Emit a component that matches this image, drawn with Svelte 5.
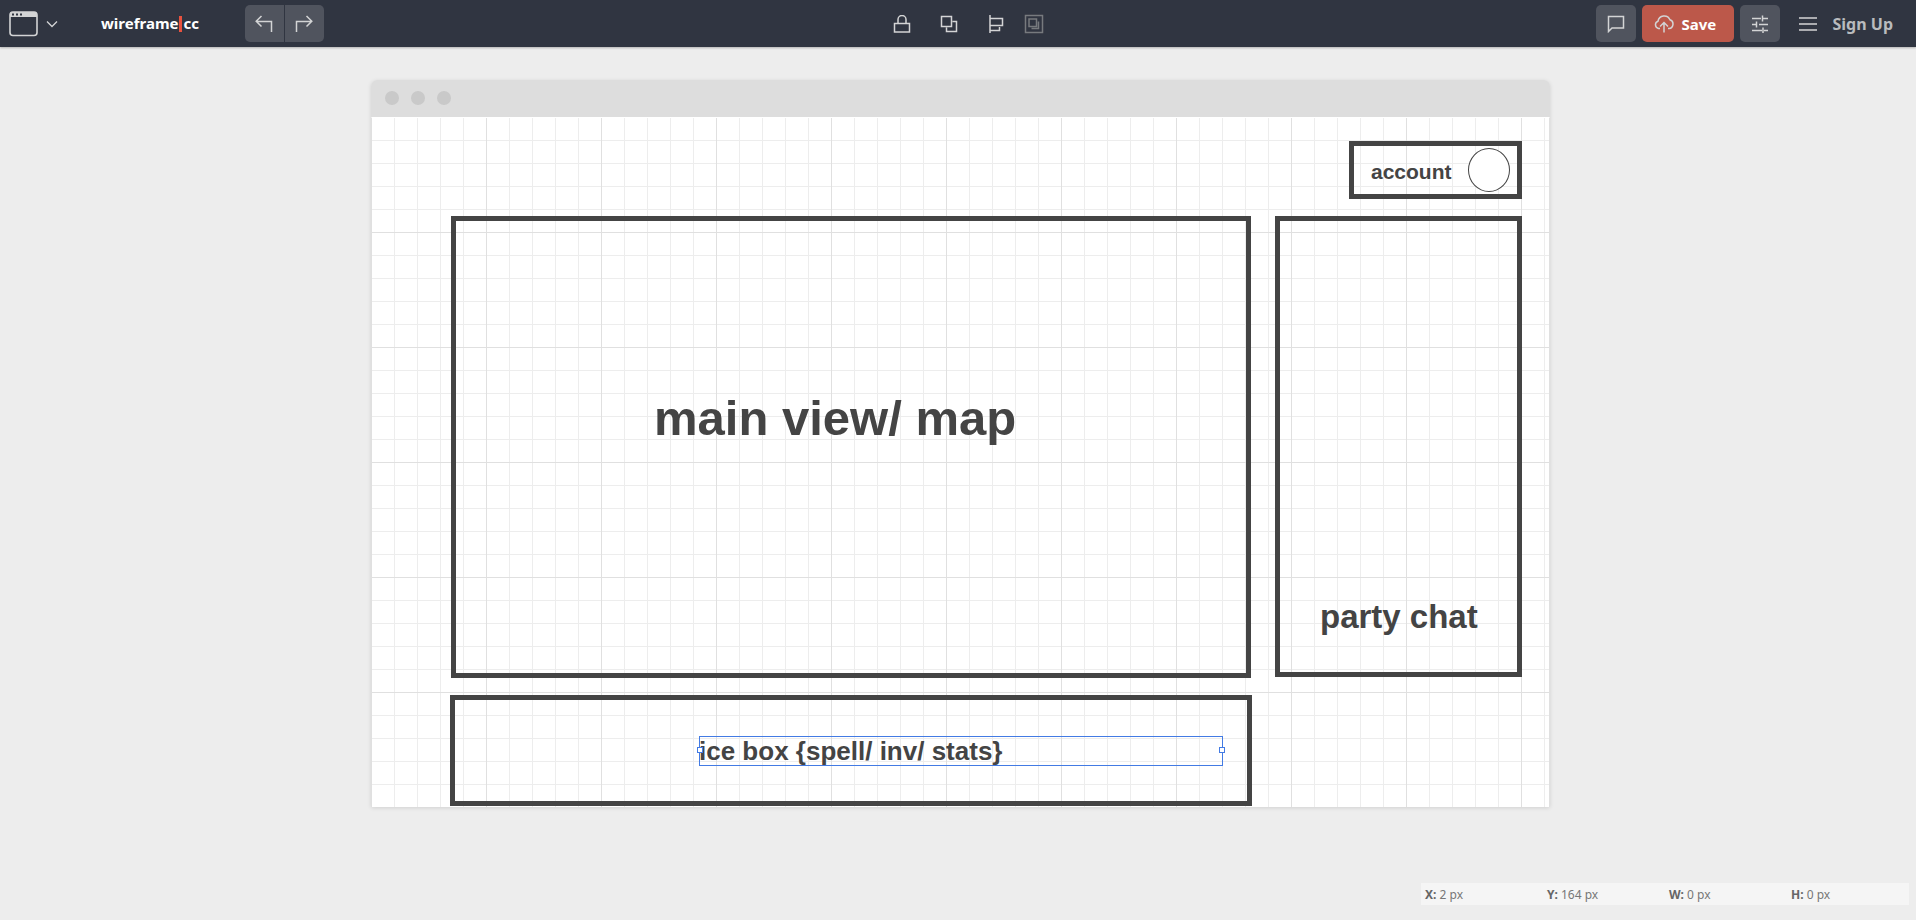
<script lang="ts">
  const stats = [
    { name: 'X', value: '2 px' },
    { name: 'Y', value: '164 px' },
    { name: 'W', value: '0 px' },
    { name: 'H', value: '0 px' }
  ];
</script>

<div class="app">
  <header class="toolbar">
    <div class="side">
      <button class="device" aria-label="Choose device">
        <svg width="29" height="26" viewBox="0 0 29 26">
          <rect x="1" y="1" width="27" height="23.5" rx="3" fill="none" stroke="#d3d4d5" stroke-width="1.6" />
          <path d="M1 6V4a3 3 0 0 1 3-3h21a3 3 0 0 1 3 3v2z" fill="#d3d4d5" />
          <path d="M3 2.5h2v2H3zM7 2.5h2v2H7zM11 2.5h2v2h-2z" fill="#303541" />
        </svg>
        <svg width="12" height="8" viewBox="0 0 12 8"><path d="M1 1.5l5 5 5-5" fill="none" stroke="#d3d4d5" stroke-width="1.3" /></svg>
      </button>
      <a class="logo" href="#home">wireframe<span class="bar"></span>cc</a>
      <div class="history">
        <button aria-label="Undo">
          <svg width="18" height="18" viewBox="0 0 18 18"><path d="M6.5 1L1.2 6.3l5.3 5.2M1.2 6.5h15.3V17" /></svg>
        </button>
        <button aria-label="Redo">
          <svg width="18" height="18" viewBox="0 0 18 18"><path d="M11.5 1l5.3 5.3-5.3 5.2M16.8 6.5H1.5V17" /></svg>
        </button>
      </div>
    </div>

    <div class="tools">
      <button aria-label="Lock">
        <svg width="18" height="18" viewBox="0 0 18 18"><path d="M1.5 8.5h15v8.5h-15zM5 8.5V4.5a4 4 0 0 1 8 0v4" /></svg>
      </button>
      <button aria-label="Arrange">
        <svg width="18" height="18" viewBox="0 0 18 18"><path d="M1.5 1.5h10v10h-10zM12.5 6.5h4v10h-10v-4" /></svg>
      </button>
      <button aria-label="Align">
        <svg width="18" height="18" viewBox="0 0 18 18"><path d="M3 0v18M3 3.5h12.500v7H3M3 15.5h9.500V12" /></svg>
      </button>
      <button class="group" aria-label="Group">
        <svg width="20" height="20" viewBox="0 0 20 20"><path d="M1.500 1.500h17v17h-17zM5 5h7.500v7.500H5zM14.500 7.500v7h-7" /></svg>
      </button>
    </div>

    <div class="side end">
      <button class="tile" aria-label="Comments">
        <svg width="18" height="18" viewBox="0 0 18 18"><path d="M1.500 1.500h15v11.500H5l-3.500 3.500z" /></svg>
      </button>
      <button class="save">
        <svg width="20" height="18" viewBox="0 0 20 18"><path d="M6 13.500H4.500A3.800 3.800 0 0 1 4 6.200A6.300 6.300 0 0 1 16 4.800A4.500 4.500 0 0 1 15 13.500H14M10 17.500V8M6 11.500l4-4 4 4" /></svg>
        Save
      </button>
      <button class="tile" aria-label="Settings">
        <svg width="18" height="18" viewBox="0 0 18 18"><path d="M1 3.500h9M12 3.500h5M11.500 0.500v6M1 9.500h5M8 9.500h9M5.500 6.500v6M1 15.500h10M13 15.500h4M12 12.500v6" /></svg>
      </button>
      <button class="menu" aria-label="Menu">
        <svg width="18" height="16" viewBox="0 0 18 16"><path d="M0 2h18M0 8h18M0 14h18" /></svg>
      </button>
      <a class="signup" href="#signup">Sign Up</a>
    </div>
  </header>

  <main class="stage">
    <div class="browser">
      <div class="chrome"><i></i><i></i><i></i></div>
      <div class="canvas">
        <div class="shape account"></div>
        <div class="text account-label">account</div>
        <div class="avatar"></div>
        <div class="shape view"></div>
        <div class="text view-label">main view/ map</div>
        <div class="shape chat"></div>
        <div class="text chat-label">party chat</div>
        <div class="shape dice"></div>
        <div class="text selected">ice box &#123;spell/ inv/ stats&#125;<b class="handle west"></b><b class="handle east"></b></div>
      </div>
    </div>
  </main>

  <footer class="status">
    {#each stats as s}
      <span><strong>{s.name}:</strong> {s.value}</span>
    {/each}
  </footer>
</div>

<style>
  :global(body) { margin: 0; background: #ededed; }
  .app {
    display: flex;
    flex-direction: column;
    min-height: 100vh;
    background: #ededed;
    font-family: "Noto Sans", "Open Sans", sans-serif;
  }
  button {
    display: flex;
    align-items: center;
    justify-content: center;
    padding: 0;
    border: 0;
    background: none;
    color: inherit;
    font: inherit;
    cursor: pointer;
  }
  a { text-decoration: none; }
  svg { display: block; flex: none; }
  .history path, .tools path, .end path { fill: none; stroke: #d3d4d5; stroke-width: 1.5; }

  .toolbar {
    display: grid;
    grid-template-columns: 1fr auto 1fr;
    align-items: center;
    height: 47px;
    background: #303541;
    box-shadow: 0 1px 2px rgba(0, 0, 0, 0.25);
  }
  .side { display: flex; align-items: center; }
  .device { gap: 8px; margin-left: 9px; }
  .logo {
    display: flex;
    align-items: center;
    margin-left: 43px;
    padding-bottom: 1px;
    color: #fff;
    font-size: 15px;
    font-weight: 700;
    line-height: 20px;
  }
  .bar { width: 3px; height: 16px; margin: 2px 1px 0; background: #e8523f; }
  .history { display: flex; gap: 1px; margin-left: 46px; }
  .history button { width: 39px; height: 37px; background: #50545e; }
  .history button:first-child { border-radius: 5px 0 0 5px; }
  .history button:last-child { border-radius: 0 5px 5px 0; }
  .tools { display: flex; padding-left: 11px; }
  .tools button { width: 47px; height: 37px; }
  .tools .group { width: 30px; }
  .tools .group path { stroke: #777a7e; }
  .end { justify-content: flex-end; padding-right: 23px; }
  .tile { width: 40px; height: 37px; border-radius: 5px; background: #50545e; }
  .save {
    justify-content: flex-start;
    gap: 8px;
    width: 92px;
    height: 37px;
    margin: 0 6px;
    padding-left: 12px;
    border-radius: 5px;
    background: #bc584a;
    color: #fff;
    font-size: 15px;
    font-weight: 700;
  }
  .menu { width: 18px; height: 37px; margin: 0 16px 0 19px; }
  .signup { color: #b9bbbd; font-size: 16px; font-weight: 700; line-height: 20px; }

  .stage { flex: 1; padding: 33px 0 0 5px; }
  .browser {
    max-width: 1179px;
    margin: 0 auto;
    border-radius: 6px 6px 2px 2px;
    box-shadow: 0 1px 4px rgba(0, 0, 0, 0.12);
  }
  .chrome {
    display: flex;
    gap: 12px;
    align-items: center;
    box-sizing: border-box;
    height: 37px;
    padding: 0 14px 2px;
    border-radius: 6px 6px 0 0;
    background: #ddd;
  }
  .chrome i { width: 14px; height: 14px; border-radius: 50%; background: #c9c9c9; }
  .canvas {
    position: relative;
    min-height: 689px;
    border: 1px solid #e0e0e0;
    border-top-color: #fff;
    border-bottom: 0;
    background-color: #fff;
    background-image:
      linear-gradient(90deg, transparent 114px, #e0e0e0 114px),
      linear-gradient(transparent 114px, #e0e0e0 114px),
      linear-gradient(90deg, transparent 22px, #ededed 22px),
      linear-gradient(transparent 22px, #ededed 22px);
    background-size: 115px 115px, 115px 115px, 23px 23px, 23px 23px;
  }
  .shape, .text, .avatar, .handle { position: absolute; box-sizing: border-box; }
  .shape { border: 5px solid #444; }
  .account { left: 977px; top: 23px; width: 173px; height: 58px; }
  .view { left: 79px; top: 98px; width: 800px; height: 462px; }
  .chat { left: 903px; top: 98px; width: 247px; height: 461px; }
  .dice { left: 78px; top: 577px; width: 802px; height: 111px; }
  .avatar {
    left: 1096px;
    top: 30px;
    width: 42px;
    height: 44px;
    border: 1px solid #444;
    border-radius: 50%;
    background: #fff;
  }
  .text {
    color: #444;
    font-family: "Liberation Sans", Arial, sans-serif;
    font-weight: 700;
    white-space: nowrap;
  }
  .account-label { left: 999px; top: 42px; font-size: 21px; line-height: 24px; }
  .view-label { left: 282px; top: 272px; font-size: 49px; line-height: 56px; }
  .chat-label { left: 948px; top: 480px; font-size: 33px; line-height: 38px; }
  .selected {
    left: 327px;
    top: 618px;
    width: 524px;
    height: 30px;
    border: 1px solid #437be4;
    font-size: 26px;
    line-height: 28px;
    text-indent: -1px;
  }
  .handle { top: 10px; width: 6px; height: 6px; border: 1px solid #437be4; background: #fff; }
  .west { left: -3px; }
  .east { right: -3px; }

  .status {
    display: flex;
    align-self: flex-end;
    margin: 0 7px 15px 0;
    background: #f5f5f5;
    color: #777;
    font-size: 12px;
    line-height: 20px;
  }
  .status span { box-sizing: border-box; width: 122px; padding: 2px 0 0 4px; }
  .status strong { color: #666; }
</style>
